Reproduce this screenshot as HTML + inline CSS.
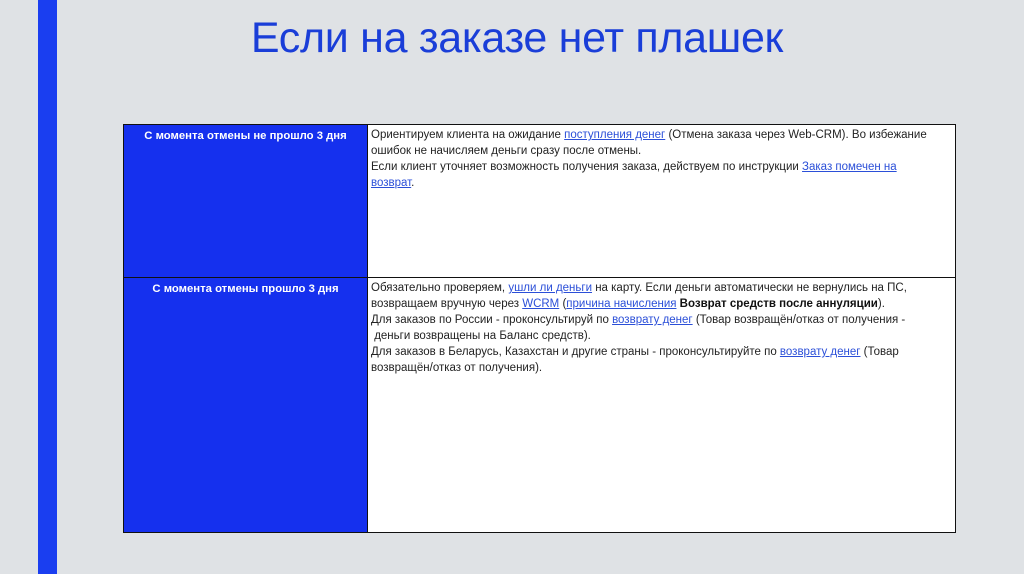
<!DOCTYPE html>
<html><head><meta charset="utf-8"><style>
body{margin:0;width:1024px;height:574px;background:#dfe2e5;position:relative;overflow:hidden;font-family:"Liberation Sans","Noto Sans CJK SC",sans-serif}
.bar{position:absolute;left:38px;top:0;width:19px;height:574px;background:#1a3ef0}
h1{position:absolute;left:0;width:1034px;top:14px;margin:0;text-align:center;font-weight:normal;font-size:43px;color:#1a3ed8;letter-spacing:-0.3px}
.t{position:absolute;left:123px;top:124px;width:831px;height:407px;border:1px solid #111;background:#fff}
.l{position:absolute;left:0;width:243px;background:#1530ee;color:#fff;font-size:11.3px;font-weight:bold;text-align:center;box-sizing:border-box;padding-top:5px}
.r{position:absolute;left:244px;right:0;font-size:11.5px;color:#222;line-height:16px;padding:2px 0 0 3px;white-space:nowrap}
.hl{position:absolute;left:0;right:0;top:152px;height:1px;background:#111}
.vl{position:absolute;left:243px;top:0;bottom:0;width:1px;background:#111}
a{color:#2b4fd8;text-decoration:underline}
b{color:#111}
</style></head><body>
<div class="bar"></div>
<h1>Если на заказе нет плашек</h1>
<div class="t">
<div class="l" style="top:0;height:152px">С момента отмены не прошло 3 дня</div>
<div class="l" style="top:153px;bottom:0">С момента отмены прошло 3 дня</div>
<div class="r" style="top:0">Ориентируем клиента на ожидание <a>поступления денег</a> (Отмена заказа через Web-CRM). Во избежание<br>ошибок не начисляем деньги сразу после отмены.<br>Если клиент уточняет возможность получения заказа, действуем по инструкции <a>Заказ помечен на</a><br><a>возврат</a>.</div>
<div class="r" style="top:153px">Обязательно проверяем, <a>ушли ли деньги</a> на карту. Если деньги автоматически не вернулись на ПС,<br>возвращаем вручную через <a>WCRM</a> (<a>причина начисления</a> <b>Возврат средств после аннуляции</b>).<br>Для заказов по России - проконсультируй по <a>возврату денег</a> (Товар возвращён/отказ от получения -<br>&nbsp;деньги возвращены на Баланс средств).<br>Для заказов в Беларусь, Казахстан и другие страны - проконсультируйте по <a>возврату денег</a> (Товар<br>возвращён/отказ от получения).</div>
<div class="hl"></div><div class="vl"></div>
</div>
</body></html>
